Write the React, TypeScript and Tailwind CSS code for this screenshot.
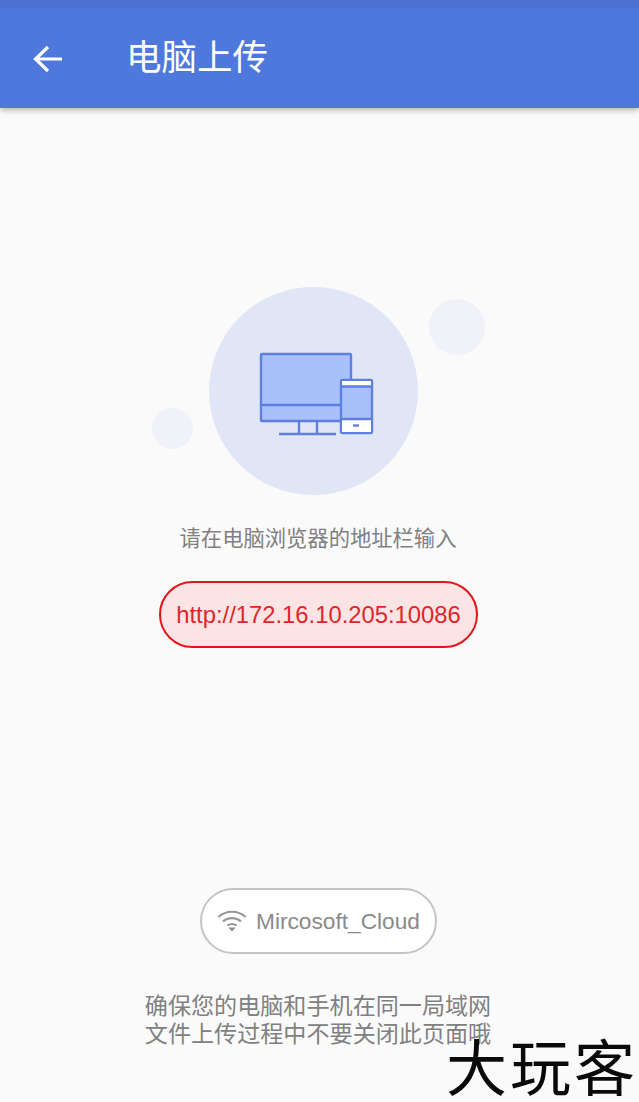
const cjk = "font-['Liberation_Sans','Noto_Sans_CJK_SC',sans-serif]";

function DevicesIcon() {
  return (
    <svg width="116" height="84" viewBox="0 0 116 84" fill="none" stroke="#5f7fdc" strokeWidth="2.400">
      <rect x="2" y="2" width="90" height="67" rx="1" fill="#a8c1fd" />
      <path d="M2 53H82" />
      <path d="M40 69V81M58 69V81M20 82H77" />
      <rect x="82" y="28" width="31" height="53" rx="1.500" fill="#a8c1fd" />
      <path d="M83 29H112V34H83ZM83 67H112V80H83Z" fill="#fff" stroke="none" />
      <path d="M82 34.500H113M82 67H113" />
      <path d="M94 73.500H100" />
    </svg>
  );
}

function WifiIcon() {
  return (
    <svg width="30" height="24" viewBox="0 0 30 24" fill="none" stroke="#969696" strokeWidth="2.200">
      <path d="M1.500 8C9 1 21 1 28.500 8" />
      <path d="M6 12.500C11 8 19 8 24 12.500" />
      <path d="M10.500 16.500C13 14.500 17 14.500 19.500 16.500" />
      <path d="M11.500 18.500H18.500L15 22.500Z" fill="#8a8a8a" stroke="none" />
    </svg>
  );
}

export default function App() {
  return (
    <div className={`relative h-[1102px] w-[639px] overflow-hidden bg-[#fafafa] ${cjk}`}>
      <header className="h-[108px] border-t-[8px] border-[#4b72d3] bg-[#4f78dc] shadow-[0_2px_6px_rgba(0,0,0,0.3)]">
        <div className="flex h-full items-center pl-[33px] pt-[2px]">
          <svg width="30" height="28" viewBox="0 0 30 28" fill="none" stroke="#fff" strokeWidth="3.200">
            <path d="M29 14H3M15 2L2.500 14L15 26" />
          </svg>
          <h1 className="ml-[63px] text-[35.500px] leading-none text-white">电脑上传</h1>
        </div>
      </header>

      <main className="flex flex-col items-center pr-[2px]">
        <div className="relative mt-[179px] mr-[10px] flex h-[208px] w-[209px] items-center justify-center rounded-full bg-[#e1e6f7]">
          <div className="ml-[6px] mt-[6px]">
            <DevicesIcon />
          </div>
          <div className="absolute left-[220px] top-[12px] h-[56px] w-[56px] rounded-full bg-[#f0f1f9]" />
          <div className="absolute left-[-57px] top-[121px] h-[41px] w-[41px] rounded-full bg-[#f0f1f9]" />
        </div>

        <p className="mt-[31px] mr-[1px] text-[21.300px] leading-[26px] text-[#808080]">请在电脑浏览器的地址栏输入</p>

        <div className="mt-[29px] flex h-[67px] w-[319px] items-center justify-center rounded-full border-2 border-[#e0161c] bg-[#fde4e4] text-[23.800px] text-[#e0262c]">
          http://172.16.10.205:10086
        </div>

        <div className="mt-[240px] flex h-[66px] w-[237px] items-center justify-center gap-[9px] rounded-full border-2 border-[#c4c4c4] bg-white text-[22.700px] text-[#8a8a8a]">
          <WifiIcon />
          <span>Mircosoft_Cloud</span>
        </div>

        <p className="mt-[38px] mr-[1px] text-center text-[23.100px] leading-[28px] text-[#808080]">
          确保您的电脑和手机在同一局域网
          <br />
          文件上传过程中不要关闭此页面哦
        </p>
      </main>

      {/* watermark */}
      <div className="absolute right-[1px] top-[1034px] font-['Noto_Sans_CJK_SC',sans-serif] text-[61px] leading-[61px] font-normal tracking-[3px] text-[#0a0a0a]">
        大玩客
      </div>
    </div>
  );
}
